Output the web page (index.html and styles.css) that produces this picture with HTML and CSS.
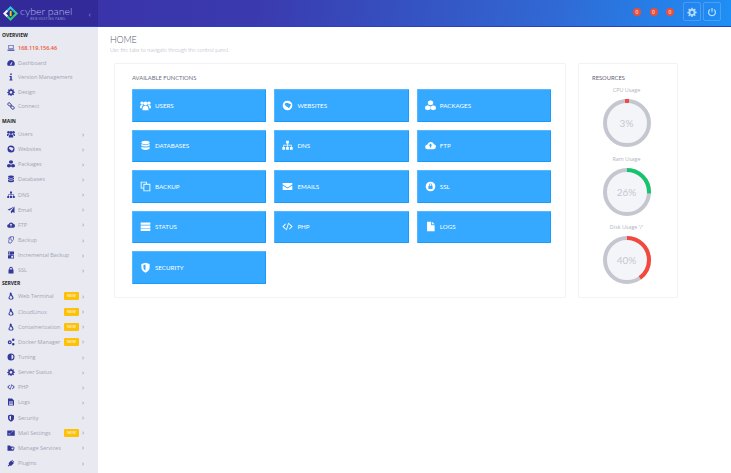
FILE: index.html
```html
<!DOCTYPE html>
<html lang="en">
<head>
<meta charset="utf-8">
<title>CyberPanel</title>
<link rel="stylesheet" href="styles.css">
</head>
<body>
<svg class="sprite" width="0" height="0">
  <symbol id="users" viewBox="0 0 16 16"><circle cx="8" cy="5" r="3"/><circle cx="3" cy="4.500" r="2.500"/><circle cx="13" cy="4.500" r="2.500"/><path d="M3.500 15c0-4.500 1-6.500 4.500-6.500s4.500 2 4.500 6.500zM0 12c0-3.500.8-5 3-5l1.500.8C3 9 2.500 10.500 2.500 12zM16 12c0-3.500-.8-5-3-5l-1.500.8C13 9 13.500 10.500 13.500 12z"/></symbol>
  <symbol id="globe" viewBox="0 0 16 16"><path fill-rule="evenodd" d="M8 1a7 7 0 1 0 0 14A7 7 0 0 0 8 1zM4 5l3-1 3 1 3 1-1 3-2 3-2-2-2-1-2-2z"/></symbol>
  <symbol id="cubes" viewBox="0 0 16 16"><path d="M8 .5l3.800 1.600v4L8 7.700 4.200 6.100v-4zM4 7.800l3.800 1.600v4L4 15 .2 13.400v-4zM12 7.800l3.800 1.600v4L12 15l-3.800-1.600v-4z"/></symbol>
  <symbol id="db" viewBox="0 0 16 16"><ellipse cx="8" cy="3.500" rx="6" ry="2.500"/><path d="M2 5.500c1 2 11 2 12 0v2.500c-1 2-11 2-12 0zM2 9.500c1 2 11 2 12 0V12.500c-1 2.700-11 2.700-12 0z"/></symbol>
  <symbol id="sitemap" viewBox="0 0 16 16"><path d="M6 1h4v4H8.500v2H14v3h1.500v4h-4v-4H13V8H8.500v2H10v4H6v-4h1.500V8H3v2h1.500v4h-4v-4H2V7h5.500V5H6z"/></symbol>
  <symbol id="cloud" viewBox="0 0 16 16"><path fill-rule="evenodd" d="M4 13.500a3.500 3.500 0 0 1-.5-7A5 5 0 0 1 13 6a3.800 3.800 0 0 1-.5 7.500zM8 5L5.500 8H7v3h2V8h1.500z"/></symbol>
  <symbol id="copy" viewBox="0 0 16 16"><path fill-rule="evenodd" d="M1 1h9v3h5v11H5v-4H1zM2.300 2.300v7.400H5V4h3.700V2.300zM6.300 5.300v8.400h7.400V5.300z"/></symbol>
  <symbol id="mail" viewBox="0 0 16 16"><path d="M1 3h14v2L8 9.500 1 5zM1 6.500l7 4.500 7-4.500V13H1z"/></symbol>
  <symbol id="lockc" viewBox="0 0 16 16"><path fill-rule="evenodd" d="M8 1a7 7 0 1 0 0 14A7 7 0 0 0 8 1zM6 7V5.500a2 2 0 0 1 4 0V7h1v4.500H5V7zM7 7h2V5.500a1 1 0 0 0-2 0z"/></symbol>
  <symbol id="server" viewBox="0 0 16 16"><path d="M1 2h14v3.500H1zM1 6.500h14V10H1zM1 11h14v3.500H1z"/></symbol>
  <symbol id="code" viewBox="0 0 16 16"><path d="M5 3.500l1 1L2.600 8 6 11.500l-1 1L.5 8zM11 3.500l-1 1L13.400 8 10 11.500l1 1L15.500 8zM9 2.500l1.200.3-3.200 10.700-1.200-.3z"/></symbol>
  <symbol id="file" viewBox="0 0 16 16"><path d="M3 1h6v5h5v9H3zM10.200 1L14 4.800h-3.800z"/></symbol>
  <symbol id="shield" viewBox="0 0 16 16"><path fill-rule="evenodd" d="M8 1l6 2v5c0 3.500-2.500 6-6 7.500C4.500 14 2 11.500 2 8V3zM8 3.500L5 4.500V8c0 2 1.300 3.500 3 4.500z"/></symbol>
  <symbol id="laptop" viewBox="0 0 16 16"><path fill-rule="evenodd" d="M3 2h10v8.500H3zM4.200 3.200v6h7.600v-6zM.5 11.500h15L14.500 13.500h-13z"/></symbol>
  <symbol id="gauge" viewBox="0 0 16 16"><path fill-rule="evenodd" d="M8 2a7.500 7.500 0 0 0-6.500 11.300h13A7.500 7.500 0 0 0 8 2zM7 9.500l3-4 .8.400L9 10.500a1.300 1.300 0 1 1-2-1z"/></symbol>
  <symbol id="info" viewBox="0 0 16 16"><path d="M6.500 1h3v3h-3zM5 6h4.500v7H11v2H5v-2h1.500V8H5z"/></symbol>
  <symbol id="cog" viewBox="0 0 16 16"><path fill-rule="evenodd" d="M7 1h2l.4 2 1.500.6L12.600 2.500 14 4l-1.100 1.700.6 1.500 2 .4v2l-2 .4-.6 1.500 1.100 1.700-1.400 1.300-1.700-1.100-1.500.6-.4 2H7l-.4-2-1.500-.6L3.400 15 2 13.700l1.100-1.700-.6-1.500-2-.4v-2l2-.4.6-1.500L2 4l1.400-1.500 1.700 1.100 1.500-.6zM8 6a2.700 2.700 0 1 0 0 5.400A2.700 2.700 0 0 0 8 6z"/></symbol>
  <symbol id="link" viewBox="0 0 16 16"><path fill="none" stroke="currentColor" stroke-width="2" d="M7 3.500a2.800 2.800 0 1 0-3.500 3.500l2 1a2.800 2.800 0 0 0 3.500-2zM9 12.500a2.800 2.800 0 1 0 3.500-3.500l-2-1a2.800 2.800 0 0 0-3.500 2z"/></symbol>
  <symbol id="plane" viewBox="0 0 16 16"><path d="M15 1v13l-4-2-2.500 3-1-4L15 1 5 9 1 7.500z"/></symbol>
  <symbol id="backup" viewBox="0 0 16 16"><path fill="none" stroke="currentColor" stroke-width="1.300" d="M8 1.500h5v5l-5 7.500H3.500v-5zM3 6.500A5.500 5.500 0 0 1 8 1.500M8 5v3l2 1"/></symbol>
  <symbol id="incr" viewBox="0 0 16 16"><path fill-rule="evenodd" d="M2 1h12v6H9v1.500h5V15H2V8.500h5V7H2zM3.500 2.500V5.500h2v-3zM8.500 10v3.500h4V10z"/></symbol>
  <symbol id="lock" viewBox="0 0 16 16"><path fill-rule="evenodd" d="M4.500 7V5a3.500 3.500 0 0 1 7 0v2H13v8H3V7zM6.300 7h3.400V5a1.700 1.700 0 0 0-3.400 0z"/></symbol>
  <symbol id="tux" viewBox="0 0 16 16"><path fill-rule="evenodd" d="M7 1c2 0 2.500 1.500 2.500 3.500 0 2 3.500 4 3.500 7.500 0 2-2 3-5 3s-5-1-5-3c0-2 2-3.500 2.500-5.500C5.700 4 5 1 7 1zM7.500 7C6 8.500 5 10 5 11.800c0 1 1.200 1.700 2.800 1.700s3-.7 3-1.700C10.800 10 9 8.500 7.500 7z"/></symbol>
  <symbol id="cogs" viewBox="0 0 16 16"><path fill-rule="evenodd" d="M5.500 4.500a4 4 0 1 0 0 8 4 4 0 0 0 0-8zm0 2.500a1.500 1.500 0 1 1 0 3 1.500 1.500 0 0 1 0-3zM12.500 1a2.500 2.500 0 1 0 0 5 2.500 2.500 0 0 0 0-5zM12.500 10a2.500 2.500 0 1 0 0 5 2.500 2.500 0 0 0 0-5z"/></symbol>
  <symbol id="tune" viewBox="0 0 16 16"><path fill-rule="evenodd" d="M8 1a7 7 0 1 0 0 14A7 7 0 0 0 8 1zm1 2.200a4.900 4.900 0 0 1 0 9.600z"/></symbol>
  <symbol id="filled" viewBox="0 0 16 16"><path fill-rule="evenodd" d="M2 1h8l4 4v10H2zM4 7v1.300h8V7zM4 9.500v1.300h8V9.500zM4 12v1.300h8V12z"/></symbol>
  <symbol id="mailset" viewBox="0 0 16 16"><path fill-rule="evenodd" d="M.5 3h15v10.500H.5zM3 10.500h4V9H3zM9 7l4-2-1-.5-4 2z"/></symbol>
  <symbol id="folder" viewBox="0 0 16 16"><path fill-rule="evenodd" d="M1 3h5l1.500 2H13v2h2.500L13 13.500H1zM9 9a2 2 0 1 0 4 0 2 2 0 0 0-4 0z"/></symbol>
  <symbol id="plug" viewBox="0 0 16 16"><path d="M11 1.500l1 1-2 2.500 1 1 2.500-2 1 1-2 2.500 1 1-4 4a3 3 0 0 1-4 .3L3 15l-1.500-1.500 2.500-2.700a3 3 0 0 1 .3-4l4-4 1 1z"/></symbol>
  <symbol id="power" viewBox="0 0 16 16"><path fill="none" stroke="currentColor" stroke-width="2" d="M4.800 4a5.500 5.500 0 1 0 6.400 0M8 1.500v6"/></symbol>
</svg>

<header class="topbar">
  <div class="brand">
    <svg class="logo" viewBox="0 0 20 20"><path fill="#2fc7e8" d="M10 0l5 5-5 5-5-5z"/><path fill="#f3f7ff" d="M0 10l5-5 5 5-5 5z"/><path fill="#2ecf7a" d="M10 20l-5-5 5-5 5 5z"/><path fill="#36d17e" d="M20 10l-5 5-5-5 5-5z"/><path fill="#1d2f9c" d="M10 4l6 6-6 6-6-6z"/><path fill="#f4c20d" d="M9 6.500h2.500v7H9z"/></svg>
    <div class="brand-text">
      <span class="brand-name">cyber panel</span>
      <span class="brand-sub">WEB HOSTING PANEL</span>
    </div>
    <span class="collapse">‹</span>
  </div>
  <div class="top-actions">
    <span class="dot">0</span><span class="dot">0</span><span class="dot">0</span>
    <a class="tool"><svg class="tool-icon"><use href="#cog"/></svg></a>
    <a class="tool"><svg class="tool-icon"><use href="#power"/></svg></a>
  </div>
</header>

<div class="shell">
  <nav class="side">
    <div class="side-label overview-label">OVERVIEW</div>
    <div class="item small ip"><svg class="ic"><use href="#laptop"/></svg><span class="tx">168.119.156.46</span></div>
    <div class="item small"><svg class="ic"><use href="#gauge"/></svg><span class="tx">Dashboard</span></div>
    <div class="item small"><svg class="ic"><use href="#info"/></svg><span class="tx">Version Management</span></div>
    <div class="item small"><svg class="ic"><use href="#cog"/></svg><span class="tx">Design</span></div>
    <div class="item small"><svg class="ic"><use href="#link"/></svg><span class="tx">Connect</span></div>
    <div class="side-label main-label">MAIN</div>
    <div class="item"><svg class="ic"><use href="#users"/></svg><span class="tx">Users</span><span class="chev">›</span></div>
    <div class="item"><svg class="ic"><use href="#globe"/></svg><span class="tx">Websites</span><span class="chev">›</span></div>
    <div class="item"><svg class="ic"><use href="#cubes"/></svg><span class="tx">Packages</span><span class="chev">›</span></div>
    <div class="item"><svg class="ic"><use href="#db"/></svg><span class="tx">Databases</span><span class="chev">›</span></div>
    <div class="item"><svg class="ic"><use href="#sitemap"/></svg><span class="tx">DNS</span><span class="chev">›</span></div>
    <div class="item"><svg class="ic"><use href="#plane"/></svg><span class="tx">Email</span><span class="chev">›</span></div>
    <div class="item"><svg class="ic"><use href="#cloud"/></svg><span class="tx">FTP</span><span class="chev">›</span></div>
    <div class="item"><svg class="ic"><use href="#backup"/></svg><span class="tx">Backup</span><span class="chev">›</span></div>
    <div class="item"><svg class="ic"><use href="#incr"/></svg><span class="tx">Incremental Backup</span><span class="chev">›</span></div>
    <div class="item"><svg class="ic"><use href="#lock"/></svg><span class="tx">SSL</span><span class="chev">›</span></div>
    <div class="side-label server-label">SERVER</div>
    <div class="item"><svg class="ic"><use href="#tux"/></svg><span class="tx">Web Terminal</span><span class="new">NEW</span><span class="chev">›</span></div>
    <div class="item"><svg class="ic"><use href="#tux"/></svg><span class="tx">CloudLinux</span><span class="new">NEW</span><span class="chev">›</span></div>
    <div class="item"><svg class="ic"><use href="#tux"/></svg><span class="tx">Containerization</span><span class="new">NEW</span><span class="chev">›</span></div>
    <div class="item"><svg class="ic"><use href="#cogs"/></svg><span class="tx">Docker Manager</span><span class="new">NEW</span><span class="chev">›</span></div>
    <div class="item"><svg class="ic"><use href="#tune"/></svg><span class="tx">Tuning</span><span class="chev">›</span></div>
    <div class="item"><svg class="ic"><use href="#cog"/></svg><span class="tx">Server Status</span><span class="chev">›</span></div>
    <div class="item"><svg class="ic"><use href="#code"/></svg><span class="tx">PHP</span><span class="chev">›</span></div>
    <div class="item"><svg class="ic"><use href="#filled"/></svg><span class="tx">Logs</span><span class="chev">›</span></div>
    <div class="item"><svg class="ic"><use href="#shield"/></svg><span class="tx">Security</span><span class="chev">›</span></div>
    <div class="item"><svg class="ic"><use href="#mailset"/></svg><span class="tx">Mail Settings</span><span class="new">NEW</span><span class="chev">›</span></div>
    <div class="item"><svg class="ic"><use href="#folder"/></svg><span class="tx">Manage Services</span><span class="chev">›</span></div>
    <div class="item"><svg class="ic"><use href="#plug"/></svg><span class="tx">Plugins</span><span class="chev">›</span></div>
  </nav>

  <main class="content">
    <div class="page-head">
      <h1 class="page-title">HOME</h1>
      <p class="page-sub">Use the tabs to navigate through the control panel.</p>
    </div>
    <div class="panels">
      <section class="panel functions">
        <h2 class="panel-title">AVAILABLE FUNCTIONS</h2>
        <div class="grid">
          <a class="tile"><svg class="tile-ic"><use href="#users"/></svg>USERS</a>
          <a class="tile"><svg class="tile-ic"><use href="#globe"/></svg>WEBSITES</a>
          <a class="tile"><svg class="tile-ic"><use href="#cubes"/></svg>PACKAGES</a>
          <a class="tile"><svg class="tile-ic"><use href="#db"/></svg>DATABASES</a>
          <a class="tile"><svg class="tile-ic"><use href="#sitemap"/></svg>DNS</a>
          <a class="tile"><svg class="tile-ic"><use href="#cloud"/></svg>FTP</a>
          <a class="tile"><svg class="tile-ic"><use href="#copy"/></svg>BACKUP</a>
          <a class="tile"><svg class="tile-ic"><use href="#mail"/></svg>EMAILS</a>
          <a class="tile"><svg class="tile-ic"><use href="#lockc"/></svg>SSL</a>
          <a class="tile"><svg class="tile-ic"><use href="#server"/></svg>STATUS</a>
          <a class="tile"><svg class="tile-ic"><use href="#code"/></svg>PHP</a>
          <a class="tile"><svg class="tile-ic"><use href="#file"/></svg>LOGS</a>
          <a class="tile"><svg class="tile-ic"><use href="#shield"/></svg>SECURITY</a>
        </div>
      </section>
      <aside class="panel resources">
        <h2 class="panel-title">RESOURCES</h2>
        <div class="meter">
          <span class="meter-label">CPU Usage</span>
          <div class="ring">
            <svg class="ring-svg" viewBox="0 0 48 48"><circle class="ring-bg" cx="24" cy="24" r="22"/><circle class="ring-red" cx="24" cy="24" r="22" pathLength="100" stroke-dasharray="3 97" stroke-dashoffset="1.500"/></svg>
            <span class="ring-val">3%</span>
          </div>
        </div>
        <div class="meter">
          <span class="meter-label">Ram Usage</span>
          <div class="ring">
            <svg class="ring-svg" viewBox="0 0 48 48"><circle class="ring-bg" cx="24" cy="24" r="22"/><circle class="ring-green" cx="24" cy="24" r="22" pathLength="100" stroke-dasharray="26 74"/></svg>
            <span class="ring-val">26%</span>
          </div>
        </div>
        <div class="meter">
          <span class="meter-label">Disk Usage '/'</span>
          <div class="ring">
            <svg class="ring-svg" viewBox="0 0 48 48"><circle class="ring-bg" cx="24" cy="24" r="22"/><circle class="ring-red" cx="24" cy="24" r="22" pathLength="100" stroke-dasharray="40 60"/></svg>
            <span class="ring-val">40%</span>
          </div>
        </div>
      </aside>
    </div>
  </main>
</div>
</body>
</html>
```

FILE: styles.css
```css
* { box-sizing: border-box; }
html, body { margin: 0; height: 473px; overflow: hidden; }
body { font-family: "Open Sans", "Liberation Sans", sans-serif; background: #fff; color: #555; }
.sprite { display: block; height: 0; }
svg { fill: currentColor; }

.topbar { height: 27px; display: flex; justify-content: space-between; border-bottom: 1px solid #2b3fc4; background: linear-gradient(100deg, #3a2fa6 0%, #3a3aae 35%, #3168d3 75%, #1e8ff6 100%); }
.brand { width: 98px; height: 26px; display: flex; align-items: center; padding: 0 7px 0 3px; background: #312a98; color: #cdd0ee; }
.logo { width: 15px; height: 15px; flex: none; }
.brand-text { display: flex; flex-direction: column; margin-left: 2px; line-height: 1; }
.brand-name { font-family: Lato, sans-serif; font-weight: 300; font-size: 10.500px; color: #b9bde8; margin-top: 1px; white-space: nowrap; }
.brand-sub { font-size: 3px; letter-spacing: .35px; color: #9da2d8; margin: 2px 0 0 10px; white-space: nowrap; }
.collapse { margin-left: auto; font-size: 8px; color: #8d90c8; }
.top-actions { display: flex; align-items: flex-start; padding: 2px 10px 0 0; }
.dot { width: 8px; height: 8px; margin: 6px 8.500px 0 0; border-radius: 50%; background: #e8503c; color: #fff; font-size: 5px; line-height: 8px; text-align: center; }
.dot:nth-child(3) { margin-right: 7px; }
.tool { width: 18px; height: 19px; margin-left: 2px; display: flex; align-items: center; justify-content: center; border: 1px solid rgba(255,255,255,.18); border-radius: 2px; color: #b4dcff; }
.tool-icon { width: 10px; height: 10px; }

.shell { display: flex; height: 446px; }
.side { width: 98px; flex: none; background: #e8e9f1; padding-top: 3px; overflow: hidden; }
.side-label { height: 10px; line-height: 10px; padding-left: 2px; font-size: 5px; font-weight: 700; color: #222; }
.overview-label { height: 11px; }
.main-label { margin-top: 2px; height: 11px; }
.server-label { height: 11px; }
.item { display: flex; align-items: center; height: 15.150px; padding: 0 14px 0 6.500px; font-size: 5.500px; color: #a3a6b4; }
.item.small { height: 14.500px; }
.ic { width: 8px; height: 8px; flex: none; color: #33389a; margin-right: 3.500px; }
.tx { white-space: nowrap; flex: 1; }
.ip .tx { color: #f0502f; font-weight: 600; }
.new { width: 15px; height: 8px; line-height: 8px; flex: none; border-radius: 1px; background: #ffc107; color: #fff; font-size: 4px; text-align: center; margin-right: 2px; }
.chev { width: 3px; flex: none; color: #8a8d9c; font-size: 7px; line-height: 7px; text-align: right; }

.content { flex: 1; padding: 7px 53px 0 12px; }
.page-head { height: 29px; }
.page-title { margin: 0; font-family: Lato, sans-serif; font-weight: 300; font-size: 9px; line-height: 12px; letter-spacing: -.2px; color: #55596a; }
.page-sub { margin: 1px 0 0; font-family: Lato, sans-serif; font-weight: 300; font-size: 5.450px; line-height: 7px; color: #a6a9b6; }
.panels { display: flex; align-items: flex-start; margin-left: 4px; gap: 12px; }
.panel { background: #fff; border: 1px solid #f3f3f6; border-radius: 2px; height: 235px; }
.functions { width: 452px; padding: 10px 14px 0 17px; }
.panel-title { margin: 0; font-family: Lato, sans-serif; font-weight: 400; font-size: 5.800px; line-height: 7px; color: #6d7080; }
.grid { display: grid; grid-template-columns: repeat(3, 134.400px); grid-auto-rows: 32.500px; gap: 8px; margin-top: 8px; }
.tile { display: flex; align-items: center; padding-left: 7px; background: #34a9ff; border: 1px solid #169bff; border-top-color: #57b8ff; border-left-color: #57b8ff; border-radius: 1px; color: #fff; font-family: Lato, sans-serif; font-size: 6.200px; font-weight: 400; }
.tile-ic { width: 11px; height: 11px; margin-right: 4px; flex: none; }

.resources { width: 100px; padding-top: 10px; }
.resources .panel-title { margin: 0 0 4px 13px; color: #5f6272; }
.meter { display: flex; flex-direction: column; align-items: center; width: 95px; height: 68.500px; }
.meter-label { font-size: 5.400px; line-height: 10px; height: 14px; color: #b0b3c0; }
.ring { position: relative; width: 48px; height: 48px; }
.ring-svg { display: block; width: 48px; height: 48px; }
.ring-bg { fill: #f4f5f9; stroke: #c4c7d0; stroke-width: 4; }
.ring-red, .ring-green { fill: none; stroke-width: 4; transform: rotate(-90deg); transform-origin: 24px 24px; }
.ring-red { stroke: #f4483c; }
.ring-green { stroke: #16c46e; }
.ring-val { position: absolute; inset: 0; display: flex; align-items: center; justify-content: center; font-family: Lato, sans-serif; font-size: 10px; color: #c4c7d0; }
```
